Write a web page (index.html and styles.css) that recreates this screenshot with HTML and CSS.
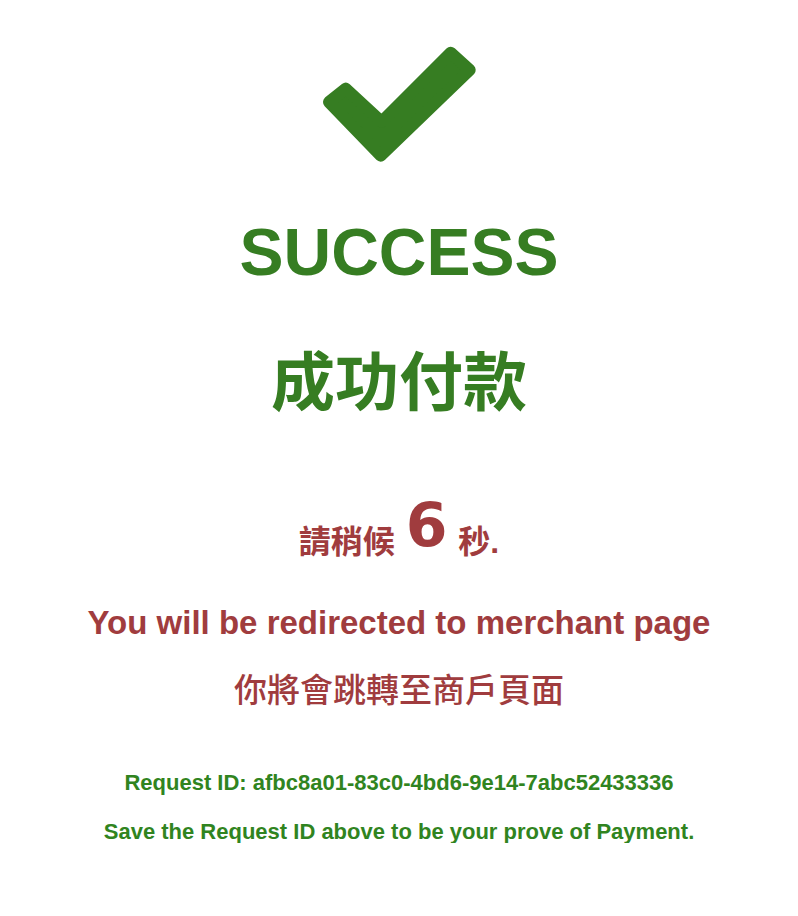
FILE: index.html
```html
<!DOCTYPE html>
<html lang="zh-Hant">
<head>
<meta charset="utf-8">
<title>SUCCESS</title>
<link rel="stylesheet" href="styles.css">
</head>
<body>
<main class="page">
  <svg class="check" width="160" height="130" viewBox="0 0 160 130" aria-hidden="true">
    <polygon points="10,62 26.7,48.7 62.7,81.8 131.7,12.7 150.7,30 61.7,115.7" fill="#367d22" stroke="#367d22" stroke-width="12" stroke-linejoin="round"/>
  </svg>
  <h1 class="title">SUCCESS</h1>
  <h2 class="title-zh">成功付款</h2>
  <p class="wait">請稍候 <span class="count">6</span> 秒.</p>
  <p class="redirect">You will be redirected to merchant page</p>
  <p class="redirect-zh">你將會跳轉至商戶頁面</p>
  <p class="request">Request ID: afbc8a01-83c0-4bd6-9e14-7abc52433336</p>
  <p class="save">Save the Request ID above to be your prove of Payment.</p>
</main>
</body>
</html>
```
FILE: styles.css
```css
html, body {
  margin: 0;
  padding: 0;
  background: #ffffff;
}

body {
  font-family: "Liberation Sans", "Noto Sans CJK TC", sans-serif;
  font-weight: 700;
}

.page {
  display: flex;
  flex-direction: column;
  align-items: center;
  text-align: center;
  padding-top: 40px;
}

.check {
  display: block;
}

.title,
.title-zh,
.wait,
.redirect,
.redirect-zh,
.request,
.save {
  margin: 0;
  font-weight: 700;
  white-space: nowrap;
}

.title {
  margin-top: 49px;
  font-size: 66px;
  line-height: 66px;
  color: #367d22;
}

.title-zh {
  margin-top: 66px;
  font-size: 64px;
  line-height: 64px;
  color: #367d22;
}

.wait {
  margin-top: 110px;
  font-size: 32px;
  line-height: 32px;
  color: #a03c3e;
}

.count {
  font-family: "DejaVu Sans", sans-serif;
  font-size: 60px;
  line-height: 0;
  vertical-align: 7px;
  margin: 0 2px;
}

.redirect {
  margin-top: 48px;
  font-size: 33px;
  line-height: 33px;
  color: #a03c3e;
}

.redirect-zh {
  margin-top: 35px;
  font-size: 33px;
  line-height: 33px;
  font-weight: 500;
  color: #a03c3e;
}

.request {
  margin-top: 65px;
  font-size: 22px;
  line-height: 22px;
  color: #308420;
}

.save {
  margin-top: 27px;
  font-size: 22px;
  line-height: 22px;
  color: #308420;
}
```
